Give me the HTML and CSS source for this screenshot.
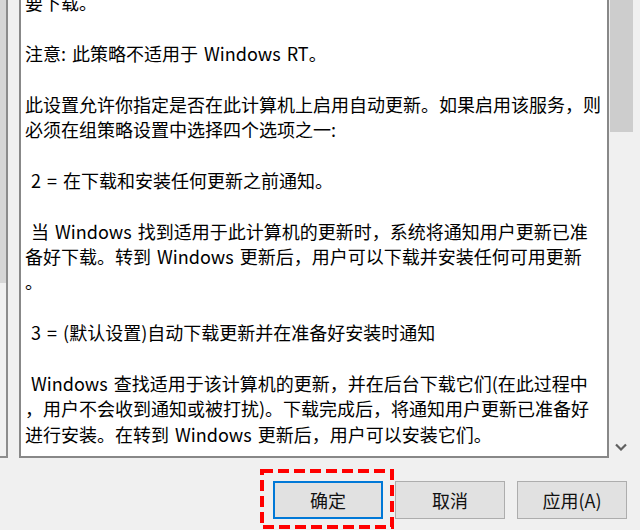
FILE: index.html
```html
<!DOCTYPE html>
<html lang="zh-CN">
<head>
<meta charset="utf-8">
<title>Policy</title>
<link rel="stylesheet" href="styles.css">
</head>
<body>
<div class="dialog">
  <div class="main">
    <div class="leftpane"><div class="lthumb"></div></div>
    <div class="textbox">
      <div class="text">
        <div class="line">要下载。</div>
        <div class="line"> </div>
        <div class="line">注意: 此策略不适用于 Windows RT。</div>
        <div class="line"> </div>
        <div class="line">此设置允许你指定是否在此计算机上启用自动更新。如果启用该服务，则</div>
        <div class="line">必须在组策略设置中选择四个选项之一:</div>
        <div class="line"> </div>
        <div class="line"> 2 = 在下载和安装任何更新之前通知。</div>
        <div class="line"> </div>
        <div class="line"> 当 Windows 找到适用于此计算机的更新时，系统将通知用户更新已准</div>
        <div class="line">备好下载。转到 Windows 更新后，用户可以下载并安装任何可用更新</div>
        <div class="line">。</div>
        <div class="line"> </div>
        <div class="line"> 3 = (默认设置)自动下载更新并在准备好安装时通知</div>
        <div class="line"> </div>
        <div class="line"> Windows 查找适用于该计算机的更新，并在后台下载它们(在此过程中</div>
        <div class="line">，用户不会收到通知或被打扰)。下载完成后，将通知用户更新已准备好</div>
        <div class="line">进行安装。在转到 Windows 更新后，用户可以安装它们。</div>
      </div>
    </div>
    <div class="vscroll">
      <div class="thumb"></div>
      <div class="spacer"></div>
      <svg class="down" width="12" height="8" viewBox="0 0 12 8"><path d="M1 1.5 L6 6.5 L11 1.5" fill="none" stroke="#606060" stroke-width="2.2"/></svg>
    </div>
  </div>
  <div class="buttons">
    <div class="okwrap">
      <button class="btn ok">确定</button>
      <svg class="mark" width="134" height="60" viewBox="0 0 134 60"><rect x="2" y="2" width="130" height="56" fill="none" stroke="#ff0000" stroke-width="4" stroke-dasharray="11 5"/></svg>
    </div>
    <button class="btn">取消</button>
    <button class="btn">应用(A)</button>
  </div>
</div>
</body>
</html>
```

FILE: styles.css
```css
html, body {
  margin: 0;
  padding: 0;
}
body {
  width: 640px;
  height: 530px;
  overflow: hidden;
  background: #f0f0f0;
  font-family: "Noto Sans CJK SC", "Noto Sans", sans-serif;
  color: #000;
}
.dialog {
  width: 640px;
  height: 530px;
  display: flex;
  flex-direction: column;
}
.main {
  display: flex;
  height: 458px;
  flex: none;
}
.leftpane {
  width: 6px;
  border-right: 2px solid #8c8c8c;
  border-bottom: 2px solid #8c8c8c;
  margin-right: 11px;
  flex: none;
}
.lthumb {
  width: 6px;
  height: 283px;
  background: #d6d6d6;
}
.textbox {
  width: 586px;
  height: 458px;
  margin-top: -4px;
  border: 2px solid #888888;
  background: #fff;
  overflow: hidden;
  flex: none;
}
.text {
  margin-top: -8px;
  padding-left: 4px;
  font-size: 18px;
  line-height: 25.4px;
  word-spacing: 2px;
}
.line {
  white-space: pre;
  height: 25.4px;
}
.vscroll {
  flex: 1;
  display: flex;
  flex-direction: column;
  align-items: flex-start;
}
.thumb {
  width: 23px;
  height: 132px;
  margin-left: 1px;
  background: #cdcdcd;
}
.spacer {
  flex: 1;
}
.down {
  margin-left: 6px;
  margin-bottom: 7px;
  display: block;
}
.buttons {
  display: flex;
  justify-content: flex-end;
  gap: 12px;
  padding-right: 13px;
  margin-top: 23px;
}
.okwrap {
  position: relative;
  display: flex;
}
.btn {
  width: 110px;
  height: 38px;
  box-sizing: border-box;
  background: #e1e1e1;
  border: 1px solid #adadad;
  border-radius: 0;
  font-family: "Noto Sans CJK SC", "Noto Sans", sans-serif;
  font-size: 18px;
  color: #111;
  padding: 0;
  margin: 0;
}
.ok {
  border: 2px solid #0078d7;
}
.mark {
  position: absolute;
  left: -13px;
  top: -12px;
}
```
